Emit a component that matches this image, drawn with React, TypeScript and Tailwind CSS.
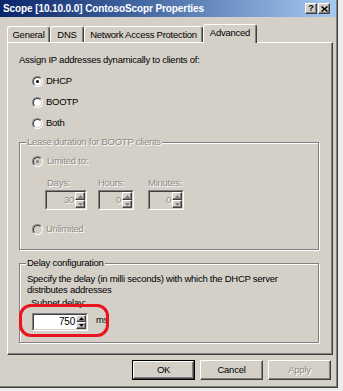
import React from "react";

function Radio({ checked, disabled }: { checked?: boolean; disabled?: boolean }) {
  return (
    <div className="w-[11px] h-[11px] shrink-0 rounded-full border border-t-[#808080] border-l-[#808080] border-r-white border-b-white">
      <div
        className={`w-full h-full rounded-full border border-t-[#404040] border-l-[#404040] border-r-[#d4d0c8] border-b-[#d4d0c8] flex items-center justify-center ${
          disabled ? "bg-[#d4d0c8]" : "bg-white"
        }`}
      >
        {checked && (
          <div className={`w-[3px] h-[3px] rounded-full ${disabled ? "bg-[#808080]" : "bg-black"}`} />
        )}
      </div>
    </div>
  );
}

function SpinBtn({ up, disabled }: { up?: boolean; disabled?: boolean }) {
  return (
    <div className="flex-1 flex items-center justify-center bg-[#d4d0c8] border border-t-white border-l-white border-r-[#404040] border-b-[#404040] shadow-[inset_-1px_-1px_0_#808080]">
      <svg width="5" height="3" viewBox="0 0 5 3">
        <path d={up ? "M2.5 0L5 3L0 3Z" : "M0 0L5 0L2.5 3Z"} fill={disabled ? "#808080" : "#000"} />
      </svg>
    </div>
  );
}

function SpinBox({
  value,
  className,
  disabled,
}: {
  value: string;
  className: string;
  disabled?: boolean;
}) {
  return (
    <div className={`border border-t-[#808080] border-l-[#808080] border-r-white border-b-white ${className}`}>
      <div
        className={`w-full h-full flex border border-t-[#404040] border-l-[#404040] border-r-[#d4d0c8] border-b-[#d4d0c8] ${
          disabled ? "bg-[#d4d0c8]" : "bg-white"
        }`}
      >
        <div
          className={`flex-1 flex items-center justify-end pr-[1px] ${
            disabled ? "text-[#8c8a86] [text-shadow:1px_1px_0_#fff]" : "text-black"
          }`}
        >
          {value}
        </div>
        <div className="w-[10px] flex flex-col">
          <SpinBtn up disabled={disabled} />
          <SpinBtn disabled={disabled} />
        </div>
      </div>
    </div>
  );
}

function Tab({ label, className, selected }: { label: string; className: string; selected?: boolean }) {
  return (
    <div
      className={`flex items-center justify-center rounded-t-[3px] border-l border-t border-r border-l-white border-t-white border-r-[#404040] shadow-[inset_-1px_0_0_#808080] bg-[#d4d0c8] ${
        selected ? "relative z-10 h-[19px] -mb-px pb-[2px]" : "h-[16px]"
      } ${className}`}
    >
      {label}
    </div>
  );
}

function Button({ label, isDefault, disabled }: { label: string; isDefault?: boolean; disabled?: boolean }) {
  return (
    <div className={`w-[63px] h-[20px] ${isDefault ? "border border-black" : ""}`}>
      <div className="w-full h-full border border-t-white border-l-white border-r-[#404040] border-b-[#404040] shadow-[inset_-1px_-1px_0_#808080] flex items-center justify-center">
        <span className={disabled ? "text-[#8c8a86] [text-shadow:1px_1px_0_#fff]" : "text-black"}>{label}</span>
      </div>
    </div>
  );
}

export default function App() {
  const dis = "text-[#8c8a86] [text-shadow:1px_1px_0_#fff]";
  return (
    <div className="relative w-[343px] h-[391px] overflow-hidden bg-[#ececec] font-['Liberation_Sans',Arial,sans-serif] text-[9.5px] leading-[12px] tracking-[-0.25px] text-black">
      <div className="w-[338px] h-[388px] bg-[#d4d0c8] shadow-[inset_-1px_-1px_0_#404040,inset_-2px_-2px_0_#808080] flex flex-col">
        {/* Title bar */}
        <div className="w-[336px] h-[17px] shrink-0 flex items-center bg-linear-to-r from-[#0a246a] to-[#a6caf0] pl-[3px] pr-[6px]">
          <span className="flex-1 text-white font-bold text-[10px] tracking-[-0.1px] whitespace-nowrap">
            Scope [10.10.0.0] ContosoScopr Properties
          </span>
          <div className="flex gap-[1px]">
            <div className="w-[12px] h-[11px] bg-[#d4d0c8] border border-t-white border-l-white border-r-[#404040] border-b-[#404040] shadow-[inset_-1px_-1px_0_#808080] flex items-center justify-center font-bold text-[9px] leading-[9px] tracking-normal">
              ?
            </div>
            <div className="w-[12px] h-[11px] bg-[#d4d0c8] border border-t-white border-l-white border-r-[#404040] border-b-[#404040] shadow-[inset_-1px_-1px_0_#808080] flex items-center justify-center">
              <svg width="7" height="6" viewBox="0 0 7 6">
                <path d="M0.5 0.5L6.5 5.5M6.5 0.5L0.5 5.5" stroke="#000" strokeWidth="1.5" />
              </svg>
            </div>
          </div>
        </div>

        {/* Tabs */}
        <div className="mt-[7px] ml-[7px] h-[18px] flex items-end shrink-0">
          <Tab label="General" className="w-[43px]" />
          <Tab label="DNS" className="w-[34px]" />
          <Tab label="Network Access Protection" className="w-[119px]" />
          <Tab label="Advanced" className="w-[54px]" selected />
        </div>

        {/* Panel */}
        <div className="ml-[7px] w-[326px] h-[313px] shrink-0 flex flex-col border border-t-white border-l-white border-r-[#404040] border-b-[#404040] shadow-[inset_-1px_-1px_0_#808080]">
          <div className="mt-[11px] ml-[11px] h-[12px]">Assign IP addresses dynamically to clients of:</div>

          <div className="mt-[9px] ml-[24px] h-[12px] flex items-center gap-[3px]">
            <Radio checked />
            <span>DHCP</span>
          </div>
          <div className="mt-[9px] ml-[24px] h-[12px] flex items-center gap-[3px]">
            <Radio />
            <span>BOOTP</span>
          </div>
          <div className="mt-[9px] ml-[24px] h-[12px] flex items-center gap-[3px]">
            <Radio />
            <span>Both</span>
          </div>

          {/* Lease duration group */}
          <fieldset className="mt-[7px] ml-[11px] w-[300px] h-[114px] border border-[#808080] shadow-[1px_1px_0_#fff,inset_1px_1px_0_#fff] flex flex-col">
            <legend className={`ml-[6px] px-[1px] h-[12px] bg-[#d4d0c8] ${dis}`}>Lease duration for BOOTP clients</legend>
            <div className="mt-[7px] ml-[12px] h-[12px] flex items-center gap-[4px]">
              <Radio checked disabled />
              <span className={dis}>Limited to:</span>
            </div>
            <div className="mt-[10px] ml-[25px] flex">
              <div className="w-[53px] flex flex-col">
                <span className={`h-[12px] pl-[2px] ${dis}`}>Days:</span>
                <SpinBox value="30" className="mt-[1px] w-[42px] h-[20px]" disabled />
              </div>
              <div className="w-[50px] flex flex-col">
                <span className={`h-[12px] ${dis}`}>Hours:</span>
                <SpinBox value="0" className="mt-[1px] w-[36px] h-[20px]" disabled />
              </div>
              <div className="w-[50px] flex flex-col">
                <span className={`h-[12px] ${dis}`}>Minutes:</span>
                <SpinBox value="0" className="mt-[1px] w-[36px] h-[20px]" disabled />
              </div>
            </div>
            <div className="mt-[13px] ml-[12px] h-[12px] flex items-center gap-[3px]">
              <Radio disabled />
              <span className={dis}>Unlimited</span>
            </div>
          </fieldset>

          {/* Delay configuration group */}
          <fieldset className="mt-[7px] ml-[11px] w-[300px] h-[86px] border border-[#808080] shadow-[1px_1px_0_#fff,inset_1px_1px_0_#fff] flex flex-col">
            <legend className="ml-[6px] px-[1px] h-[12px] bg-[#d4d0c8]">Delay configuration</legend>
            <div className="mt-[4px] ml-[7px] leading-[11px]">
              Specify the delay (in milli seconds) with which the DHCP server
              <br />
              distributes addresses
            </div>
            <div className="mt-[2px] ml-[11px] h-[12px]">Subnet delay:</div>
            <div className="mt-[4px] ml-[12px] flex items-start">
              <SpinBox value="750" className="w-[56px] h-[18px] text-[10px]" />
              <span className="ml-[8px] mt-[1px]">ms</span>
            </div>
          </fieldset>
        </div>

        {/* Buttons */}
        <div className="mt-[5px] pr-[5px] w-[336px] flex justify-end gap-[5px]">
          <Button label="OK" isDefault />
          <Button label="Cancel" />
          <Button label="Apply" disabled />
        </div>
      </div>

      {/* Red annotation */}
      <div className="absolute left-[19px] top-[304px] w-[90px] h-[33px] rounded-[12px] border-[3px] border-[#e8141e]" />
    </div>
  );
}
